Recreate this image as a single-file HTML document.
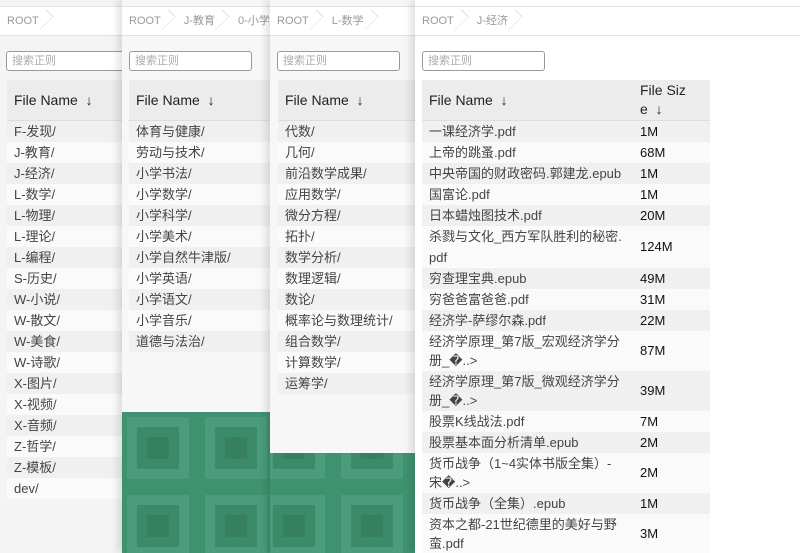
<!DOCTYPE html>
<html><head><meta charset="utf-8"><style>
*{margin:0;padding:0;box-sizing:border-box}
body{width:800px;height:553px;overflow:hidden;background:#f4f4f4;font-family:"Liberation Sans","Noto Sans CJK SC",sans-serif;position:relative}
.p{position:absolute;top:0;height:553px;background:#f7f7f7;overflow:hidden;box-shadow:-4px 0 8px rgba(0,0,0,.12)}
.bc{position:absolute;left:0;right:0;top:6px;height:30px;background:#fff;border-top:1px solid #e3e3e3;border-bottom:1px solid #e3e3e3;font-size:11px;color:#999;white-space:nowrap}
.bc span{display:inline-block;line-height:28px;padding:0 16px 0 7px;position:relative}
.bc span:after{content:"";position:absolute;right:2px;top:3px;width:19px;height:19px;border-right:1px solid #ddd;border-top:1px solid #ddd;transform:rotate(45deg) scaleX(.5)}
.in{position:absolute;top:51px;height:20px;border:1px solid #999;border-radius:3px;background:#fff;font-size:11px;color:#aaa;padding-left:5px;line-height:18px}
table{position:absolute;top:80px;border-collapse:collapse;font-size:13px;color:#444}
th{background:#ececec;text-align:left;font-weight:normal;color:#222;font-size:14px;height:40px;padding-left:7px;border-bottom:1px solid #ddd}
td{line-height:21px;padding:0 0 0 7px;vertical-align:middle}
td.w{line-height:19px;padding-top:1px;padding-bottom:1px}
tr:nth-child(even) td{background:#f0f0f0}
tr:nth-child(odd) td{background:#fafafa}
td.s{color:#111;padding-left:8px}
</style></head><body>

<div class="p" style="left:0;width:130px;background:#f4f4f4;box-shadow:none">
<div class="bc"><span>ROOT</span></div>
<div class="in" style="left:6px;width:130px">搜索正则</div>
<table style="left:7px;width:130px">
<tr><th>File Name &nbsp;↓</th></tr>
<tr><td>F-发现/</td></tr><tr><td>J-教育/</td></tr><tr><td>J-经济/</td></tr><tr><td>L-数学/</td></tr><tr><td>L-物理/</td></tr><tr><td>L-理论/</td></tr><tr><td>L-编程/</td></tr><tr><td>S-历史/</td></tr><tr><td>W-小说/</td></tr><tr><td>W-散文/</td></tr><tr><td>W-美食/</td></tr><tr><td>W-诗歌/</td></tr><tr><td>X-图片/</td></tr><tr><td>X-视频/</td></tr><tr><td>X-音频/</td></tr><tr><td>Z-哲学/</td></tr><tr><td>Z-模板/</td></tr><tr><td>dev/</td></tr>
</table>
</div>

<div class="p" style="left:122px;width:150px">
<div class="bc"><span>ROOT</span><span>J-教育</span><span>0-小学</span></div>
<div class="in" style="left:7px;width:123px">搜索正则</div>
<table style="left:7px;width:150px">
<tr><th>File Name &nbsp;↓</th></tr>
<tr><td>体育与健康/</td></tr><tr><td>劳动与技术/</td></tr><tr><td>小学书法/</td></tr><tr><td>小学数学/</td></tr><tr><td>小学科学/</td></tr><tr><td>小学美术/</td></tr><tr><td>小学自然牛津版/</td></tr><tr><td>小学英语/</td></tr><tr><td>小学语文/</td></tr><tr><td>小学音乐/</td></tr><tr><td>道德与法治/</td></tr>
</table>
<svg style="position:absolute;left:0;top:412px" width="150" height="141"><defs><pattern id="pt" width="78" height="78" patternUnits="userSpaceOnUse" x="-3" y="-3"><rect width="78" height="78" fill="#3f9270"/><rect x="8" y="8" width="62" height="62" fill="#4a9c7c"/><rect x="18" y="18" width="42" height="42" fill="#3b8a69"/><rect x="28" y="28" width="22" height="22" fill="#36805f"/></pattern></defs><rect width="150" height="141" fill="url(#pt)"/></svg>
</div>

<div class="p" style="left:270px;width:145px">
<div class="bc"><span>ROOT</span><span>L-数学</span></div>
<div class="in" style="left:7px;width:123px">搜索正则</div>
<table style="left:8px;width:145px">
<tr><th>File Name &nbsp;↓</th></tr>
<tr><td>代数/</td></tr><tr><td>几何/</td></tr><tr><td>前沿数学成果/</td></tr><tr><td>应用数学/</td></tr><tr><td>微分方程/</td></tr><tr><td>拓扑/</td></tr><tr><td>数学分析/</td></tr><tr><td>数理逻辑/</td></tr><tr><td>数论/</td></tr><tr><td>概率论与数理统计/</td></tr><tr><td>组合数学/</td></tr><tr><td>计算数学/</td></tr><tr><td>运筹学/</td></tr>
</table>
<svg style="position:absolute;left:0;top:453px" width="145" height="100"><defs><pattern id="pt2" width="78" height="78" patternUnits="userSpaceOnUse" x="-15" y="-44"><rect width="78" height="78" fill="#3f9270"/><rect x="8" y="8" width="62" height="62" fill="#4a9c7c"/><rect x="18" y="18" width="42" height="42" fill="#3b8a69"/><rect x="28" y="28" width="22" height="22" fill="#36805f"/></pattern></defs><rect width="145" height="100" fill="url(#pt2)"/></svg>
</div>

<div class="p" style="left:415px;width:385px;background:#fff">
<div class="bc"><span>ROOT</span><span>J-经济</span></div>
<div class="in" style="left:7px;width:123px">搜索正则</div>
<table style="left:7px;width:288px">
<tr><th style="width:210px">File Name &nbsp;↓</th><th style="padding-left:8px;line-height:19px">File Siz<br>e &nbsp;↓</th></tr>
<tr><td>一课经济学.pdf</td><td class="s">1M</td></tr>
<tr><td>上帝的跳蚤.pdf</td><td class="s">68M</td></tr>
<tr><td>中央帝国的财政密码.郭建龙.epub</td><td class="s">1M</td></tr>
<tr><td>国富论.pdf</td><td class="s">1M</td></tr>
<tr><td>日本蜡烛图技术.pdf</td><td class="s">20M</td></tr>
<tr><td>杀戮与文化_西方军队胜利的秘密.<br>pdf</td><td class="s">124M</td></tr>
<tr><td>穷查理宝典.epub</td><td class="s">49M</td></tr>
<tr><td>穷爸爸富爸爸.pdf</td><td class="s">31M</td></tr>
<tr><td>经济学-萨缪尔森.pdf</td><td class="s">22M</td></tr>
<tr><td class="w">经济学原理_第7版_宏观经济学分<br>册_�..&gt;</td><td class="s">87M</td></tr>
<tr><td class="w">经济学原理_第7版_微观经济学分<br>册_�..&gt;</td><td class="s">39M</td></tr>
<tr><td>股票K线战法.pdf</td><td class="s">7M</td></tr>
<tr><td>股票基本面分析清单.epub</td><td class="s">2M</td></tr>
<tr><td class="w">货币战争（1~4实体书版全集）-<br>宋�..&gt;</td><td class="s">2M</td></tr>
<tr><td>货币战争（全集）.epub</td><td class="s">1M</td></tr>
<tr><td class="w">资本之都-21世纪德里的美好与野<br>蛮.pdf</td><td class="s">3M</td></tr>
</table>
</div>
</body></html>
